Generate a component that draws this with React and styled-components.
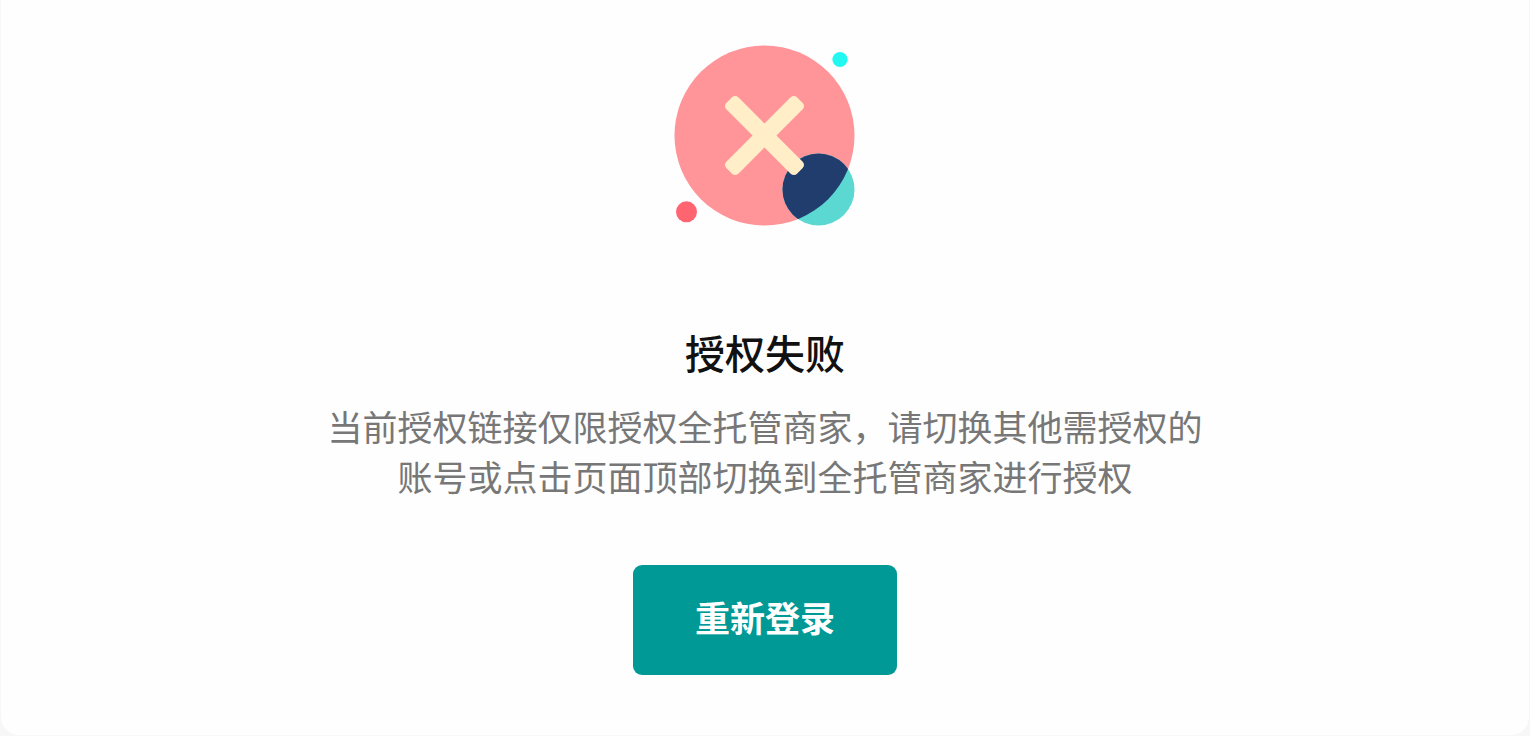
import styled, { createGlobalStyle, ThemeProvider } from 'styled-components';

const theme = {
  colors: {
    page: '#f7f7f7',
    card: '#fefefe',
    title: '#111111',
    text: '#777777',
    primary: '#009995',
    primaryDark: '#00837f',
    white: '#ffffff',
  },
  sizes: {
    title: '40px',
    text: '35px',
  },
};

const GlobalStyle = createGlobalStyle`
  * {
    box-sizing: border-box;
  }

  body {
    margin: 0;
    background-color: ${theme.colors.page};
    font-family: "Noto Sans CJK SC", "Noto Sans", sans-serif;
  }
`;

const Card = styled.main`
  display: flex;
  flex-direction: column;
  align-items: center;
  margin: 0 1px 1px;
  padding: 45px 24px 60px;
  border-radius: 0 0 18px 18px;
  background-color: ${props => props.theme.colors.card};
`;

const Illustration = styled.svg`
  display: block;
  width: 182px;
  height: 181px;
`;

const Title = styled.h1`
  margin: 98px 0 21px;
  color: ${props => props.theme.colors.title};
  font-size: ${props => props.theme.sizes.title};
  font-weight: 500;
  line-height: 56px;
`;

const Description = styled.p`
  max-width: 880px;
  margin: 0 0 64px;
  color: ${props => props.theme.colors.text};
  font-size: ${props => props.theme.sizes.text};
  line-height: 50px;
  text-align: center;
`;

const Button = styled.button`
  padding: 26px 62px 32px;
  border: 0;
  border-radius: 9px;
  background-color: ${props => props.theme.colors.primary};
  color: ${props => props.theme.colors.white};
  font-family: inherit;
  font-size: ${props => props.theme.sizes.text};
  font-weight: 700;
  line-height: 52px;
  cursor: pointer;

  &:hover {
    background-color: ${props => props.theme.colors.primaryDark};
  }
`;

const FailedIcon = () => (
  <Illustration viewBox="0 0 182 181" aria-hidden="true">
    <defs>
      <clipPath id="disc">
        <circle cx="90.5" cy="90.5" r="90" />
      </clipPath>
    </defs>
    <circle cx="90.5" cy="90.5" r="90" fill="#ff9499" />
    <circle cx="144.5" cy="144.5" r="36" fill="#5cd8d3" />
    <circle cx="144.5" cy="144.5" r="36" fill="#213d6e" clipPath="url(#disc)" />
    <g fill="#ffeec8" transform="translate(90.5 90.5)">
      <rect x="-50" y="-8.5" width="100" height="17" rx="4.5" transform="rotate(45)" />
      <rect x="-50" y="-8.5" width="100" height="17" rx="4.5" transform="rotate(-45)" />
    </g>
    <circle cx="166" cy="14.5" r="7.6" fill="#22f8f0" />
    <circle cx="12.5" cy="166.8" r="10.5" fill="#ff6471" />
  </Illustration>
);

const App = () => (
  <ThemeProvider theme={theme}>
    <GlobalStyle />
    <Card>
      <FailedIcon />
      <Title>授权失败</Title>
      <Description>
        当前授权链接仅限授权全托管商家，请切换其他需授权的账号或点击页面顶部切换到全托管商家进行授权
      </Description>
      <Button type="button">重新登录</Button>
    </Card>
  </ThemeProvider>
);

export default App;
